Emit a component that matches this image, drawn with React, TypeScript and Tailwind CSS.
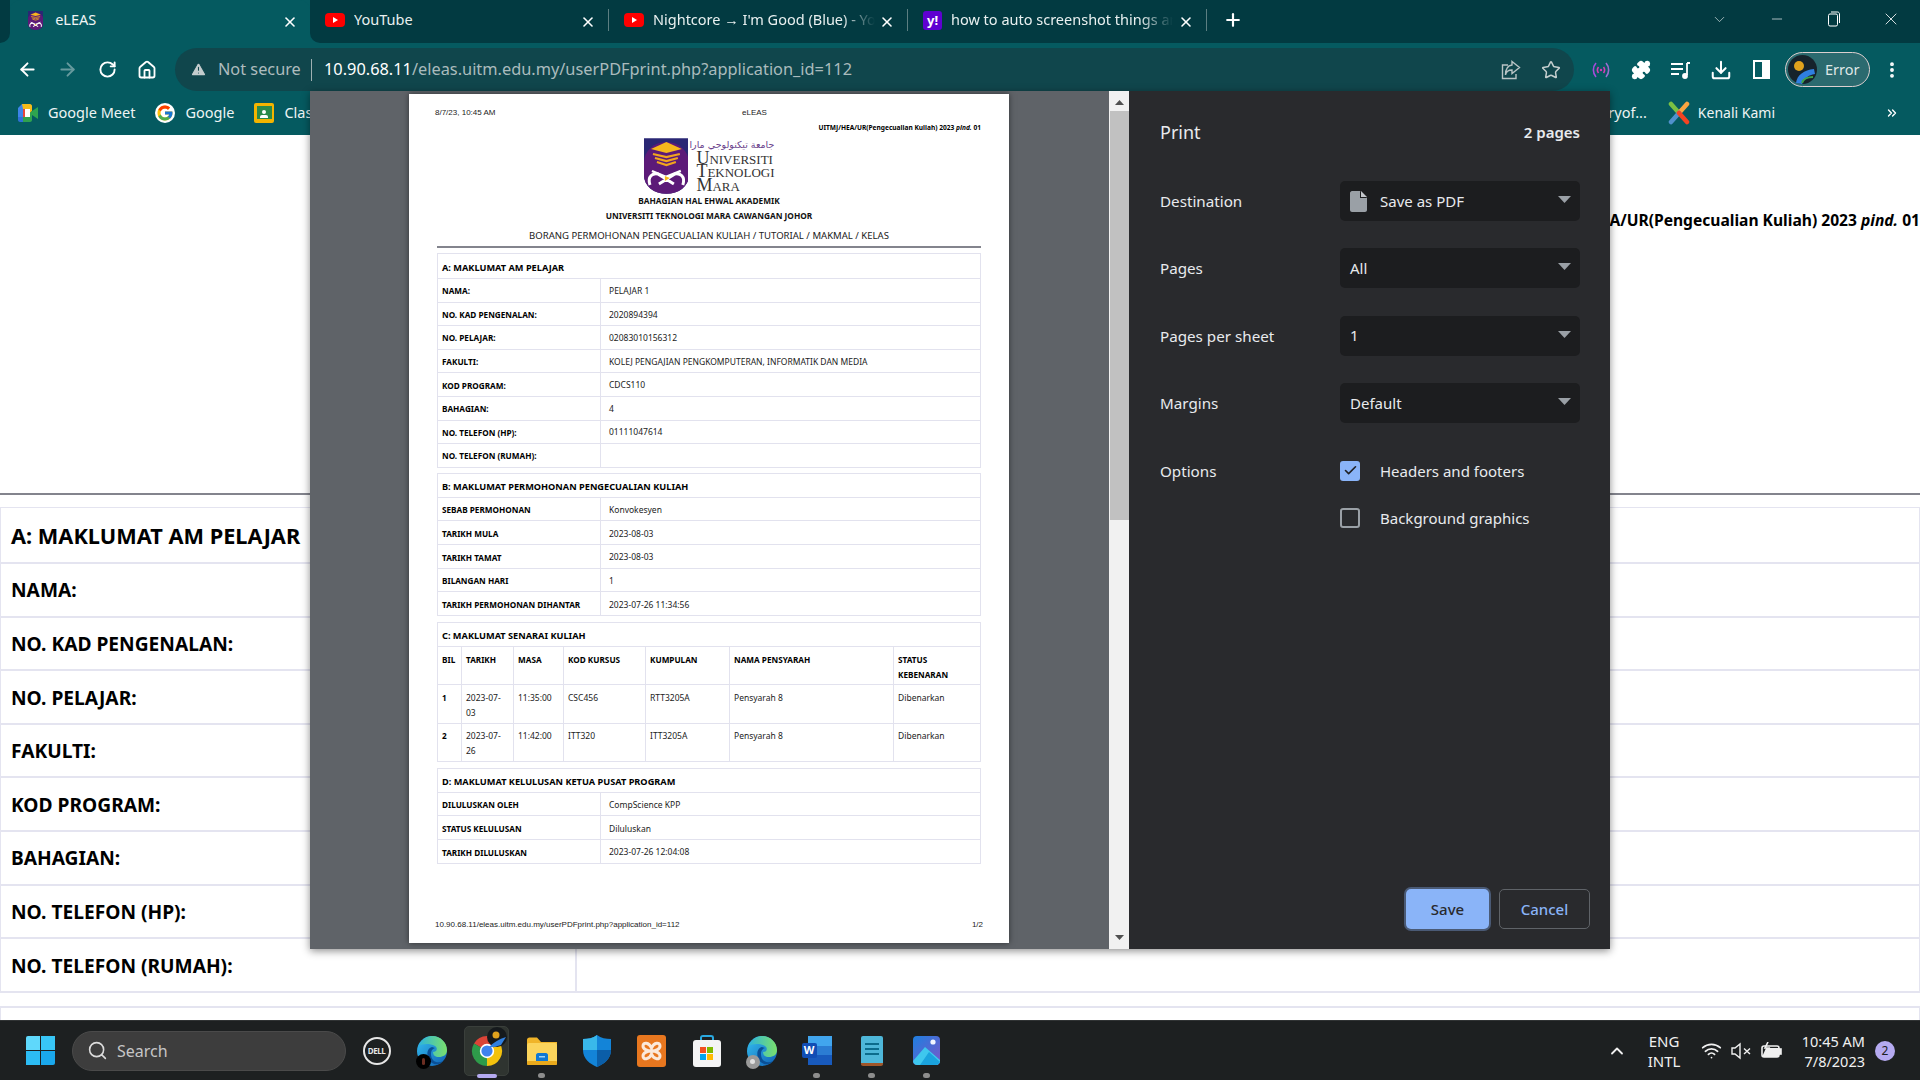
import React from 'react';
import { ArrowLeft, ArrowRight, RotateCw, Home, Star, Download, MoreVertical, X, Plus, ChevronDown, ChevronUp, Minus, Search, Wifi, Check, ChevronsRight, Puzzle, TriangleAlert } from 'lucide-react';
import { FcGoogle } from 'react-icons/fc';

const Shield = ({ size = 16 }: { size?: number }) => (
  <svg viewBox="0 0 45 56" width={size * 0.8} height={size}>
    <path d="M0 0H45V38A22.5 18 0 0 1 0 38Z" fill="#2a2774" />
    <path d="M0 24A22.5 20 0 0 1 45 24V38A22.5 18 0 0 1 0 38Z" fill="#5c1a78" />
    <path d="M22.5 4L38 11L22.5 15L7 11Z" fill="#f6b81c" />
    <path d="M9 16L22.5 19L36 16M11 20L22.5 23L34 20M13 24L22.5 27L32 24" stroke="#f2a51e" strokeWidth="2.2" fill="none" />
    <path d="M6 47C3 38 9 35 14 36L30 46M39 47C42 38 36 35 31 36L15 46" stroke="#fff" strokeWidth="3" fill="none" />
    <path d="M8 33L22 39L37 33" stroke="#fff" strokeWidth="2.4" fill="none" />
    <path d="M21 38L26 40L21 43Z" fill="#f6b81c" />
  </svg>
);

const YouTubeIcon = () => (
  <svg viewBox="0 0 20 20" width="20" height="20">
    <rect x="0" y="3" width="20" height="14" rx="4" fill="#f00" />
    <path d="M8 7L13 10L8 13Z" fill="#fff" />
  </svg>
);

const Tab = ({ icon, title, fade, sep = true }: { icon: React.ReactNode; title: string; fade?: boolean; sep?: boolean }) => (
  <div className="w-[299px] h-full shrink-0 flex items-center relative pl-[15px] pb-[3px]">
    {icon}
    <span className={`ml-[9px] text-[14.5px] text-[#e9f0f0] whitespace-nowrap overflow-hidden w-[222px] ${fade ? '[mask-image:linear-gradient(to_right,black_85%,transparent)]' : ''}`}>{title}</span>
    <X size={16} strokeWidth={2.4} className="absolute right-[13px] top-[14px] text-white" />
    {sep && <div className="absolute right-0 top-[9px] h-[22px] w-px bg-[#5c7f82]" />}
  </div>
);

const TabStrip = () => (
  <div className="h-[43px] bg-[#055a60] flex shrink-0">
    <div className="w-[10px] bg-[#023a41] rounded-br-[10px]" />
    <div className="w-[300px] bg-[#055a60] rounded-t-[10px] flex items-center relative pl-[18px] pb-[3px]">
      <Shield size={19} />
      <span className="ml-[12px] text-[14.5px] text-[#f0f5f5]">eLEAS</span>
      <X size={16} strokeWidth={2.4} className="absolute right-[12px] top-[14px] text-white" />
    </div>
    <div className="flex-1 bg-[#023a41] rounded-bl-[10px] flex items-stretch">
      <Tab icon={<YouTubeIcon />} title="YouTube" />
      <Tab icon={<YouTubeIcon />} title="Nightcore → I'm Good (Blue) - YouTube" fade />
      <Tab
        icon={<div className="w-[19px] h-[19px] rounded-[3px] bg-[#5f01d1] text-white text-[13px] font-bold flex items-center justify-center leading-none">y!</div>}
        title="how to auto screenshot things and paste"
        fade
      />
      <div className="w-[52px] flex items-center justify-center pb-[4px]">
        <Plus size={20} strokeWidth={2.6} className="text-white" />
      </div>
      <div className="flex-1" />
      <div className="w-[57px] flex items-center justify-center pb-[5px]"><ChevronDown size={17} strokeWidth={1} className="text-[#d8e2e3]" /></div>
      <div className="w-[57px] flex items-center justify-center pb-[5px]"><Minus size={16} strokeWidth={1} className="text-white" /></div>
      <div className="w-[57px] flex items-center justify-center pb-[5px]">
        <svg width="14" height="16" viewBox="0 0 14 16" fill="none" stroke="#fff" strokeWidth="1"><rect x="1.5" y="3" width="9" height="12" rx="1.5" /><path d="M4 1H10.5C11.8 1 12.5 2 12.5 3V12" /></svg>
      </div>
      <div className="w-[58px] flex items-center justify-center pb-[5px]"><X size={20} strokeWidth={1} className="text-white" /></div>
    </div>
  </div>
);

const ToolBtn = ({ children }: { children: React.ReactNode }) => (
  <div className="w-[40px] h-[40px] shrink-0 flex items-center justify-center">{children}</div>
);

const Toolbar = () => (
  <div className="h-[48px] bg-[#055a60] flex items-center pl-[7px] shrink-0 pt-[5px]">
    <ToolBtn><ArrowLeft size={21} strokeWidth={2.2} className="text-white" /></ToolBtn>
    <ToolBtn><ArrowRight size={21} strokeWidth={2.2} className="text-[#679a9e]" /></ToolBtn>
    <ToolBtn><RotateCw size={19} strokeWidth={2.4} className="text-white" /></ToolBtn>
    <ToolBtn><Home size={20} strokeWidth={2.2} className="text-white" /></ToolBtn>
    <div className="ml-[8px] w-[1399px] h-[43px] rounded-full bg-[#10464c] flex items-center pl-[15px] pr-[13px]">
      <TriangleAlert size={17} fill="#c3cccd" strokeWidth={1.5} className="text-[#10464c]" />
      <span className="ml-[11px] text-[16.3px] text-[#aebcbe] w-[83px] whitespace-nowrap">Not secure</span>
      <div className="ml-[10px] w-px h-[22px] bg-[#9fb0b2]" />
      <span className="ml-[12px] text-[16.35px] whitespace-nowrap text-[#aabbbd]"><span className="text-white">10.90.68.11</span>/eleas.uitm.edu.my/userPDFprint.php?application_id=112</span>
      <div className="ml-auto flex items-center gap-[20px]">
        <svg width="20" height="20" viewBox="0 0 20 20" fill="none" stroke="#b9c4c5" strokeWidth="1.4"><path d="M7 5H1.5V18.5H15V14" /><path d="M11 1.5L18.5 7.5L11 13.5V10C7 10 5 12 4.5 15C4.5 9 7 5.5 11 5Z" /></svg>
        <Star size={20} strokeWidth={1.8} className="text-[#c4cece]" />
      </div>
    </div>
    <div className="ml-[7px] flex">
      <ToolBtn>
        <svg width="18" height="18" viewBox="0 0 18 18" fill="none" strokeWidth="1.6"><path d="M4 2C0.5 6 0.5 12 4 16" stroke="#a54ddc" /><path d="M14 2C17.5 6 17.5 12 14 16" stroke="#9a6fd0" /><path d="M6.5 6C5 8 5 10 6.5 12M11.5 6C13 8 13 10 11.5 12" stroke="#d63ab6" /><circle cx="9" cy="9" r="1.2" fill="#d63ab6" stroke="none" /></svg>
      </ToolBtn>
      <ToolBtn><Puzzle size={20} fill="#fff" className="text-white" /></ToolBtn>
      <ToolBtn>
        <svg width="20" height="20" viewBox="0 0 20 20" fill="none" stroke="#fff" strokeWidth="1.8"><path d="M0 4H12M0 9H12M0 14H8" /><path d="M16 3H19M16 3V15" /><circle cx="14" cy="16" r="2" fill="#fff" /></svg>
      </ToolBtn>
      <ToolBtn><Download size={22} strokeWidth={2.2} className="text-white" /></ToolBtn>
      <ToolBtn>
        <div className="w-[17px] h-[19px] border-[2.5px] border-white flex justify-end"><div className="w-[6px] bg-white" /></div>
      </ToolBtn>
    </div>
    <div className="ml-[4px] w-[85px] h-[35px] rounded-full border-[1.5px] border-[#dccfcf] bg-[#2b6a6f] flex items-center pl-[2px]">
      <svg width="29" height="29" viewBox="0 0 29 29" className="shrink-0">
        <circle cx="14.5" cy="14.5" r="14.5" fill="#16232c" />
        <circle cx="11" cy="11" r="5" fill="#e0a21d" />
        <path d="M8 28C9 20 16 15 26 14L27 19C20 20 17 23 14 29Z" fill="#2f7fe0" />
        <path d="M14 28C15 24 20 22 25 22" stroke="#3fa24a" strokeWidth="2" fill="none" />
      </svg>
      <span className="ml-[8px] text-[14.5px] text-[#dfe6e6]">Error</span>
    </div>
    <div className="ml-[2px]"><ToolBtn><MoreVertical size={20} strokeWidth={2.6} className="text-white" /></ToolBtn></div>
  </div>
);

const BookmarkBar = () => (
  <div className="h-[44px] bg-[#055a60] flex items-center pl-[18px] pb-[1px] text-[14.5px] text-[#eef4f4] shrink-0 whitespace-nowrap">
    <svg width="20" height="18" viewBox="0 0 20 18" className="shrink-0">
      <path d="M0 4L4 0H12V5H5V13H0Z" fill="#3d84e8" />
      <path d="M0 13H5V18H2C1 18 0 17 0 16Z" fill="#2f6fd6" />
      <path d="M5 13H12V18H5Z" fill="#30a14e" />
      <path d="M4 0H12C13 0 14 1 14 2V7L12 9V5H5Z" fill="#f6bb19" />
      <path d="M7 5H12V13H7Z" fill="#fff" />
      <path d="M12 9L14 7L20 3V15L14 11V16C14 17 13 18 12 18Z" fill="#2ea44f" />
      <path d="M5 5H7V13H5Z" fill="#e8453c" />
    </svg>
    <span className="ml-[10px]">Google Meet</span>
    <div className="ml-[20px] w-[20px] h-[20px] rounded-full bg-white flex items-center justify-center shrink-0"><FcGoogle size={18} /></div>
    <span className="ml-[10px]">Google</span>
    <div className="ml-[20px] w-[20px] h-[20px] bg-[#f4b400] flex items-center justify-center shrink-0 rounded-[2px]">
      <div className="w-[15px] h-[13px] bg-[#2a8a4a] flex flex-col items-center justify-end pb-[1px] gap-[1px]">
        <div className="w-[4px] h-[4px] rounded-full bg-white" />
        <div className="w-[8px] h-[3px] bg-white rounded-t-[2px]" />
      </div>
    </div>
    <span className="ml-[10px]">Classroom</span>
    <div className="flex-1" />
    <span className="text-[#eef4f4]">Historyof...</span>
    <svg width="22" height="24" viewBox="0 0 22 24" className="ml-[21px] shrink-0" fill="none" strokeWidth="4.5" strokeLinecap="round">
      <path d="M3 3L11 12" stroke="#7ac143" />
      <path d="M19 3L11 12" stroke="#f9a541" />
      <path d="M3 21L11 12" stroke="#5091cd" />
      <path d="M19 21L11 12" stroke="#f44321" />
    </svg>
    <span className="ml-[8px] text-[14px]">Kenali Kami</span>
    <div className="ml-[109px] mr-[20px] w-[16px] flex justify-center"><ChevronsRight size={14} strokeWidth={2.4} className="text-white" /></div>
  </div>
);

const bgRows = ['NAMA:', 'NO. KAD PENGENALAN:', 'NO. PELAJAR:', 'FAKULTI:', 'KOD PROGRAM:', 'BAHAGIAN:', 'NO. TELEFON (HP):', 'NO. TELEFON (RUMAH):'];

const Background = () => (
  <div className="flex-1 bg-white overflow-hidden flex flex-col font-['Noto_Sans',sans-serif]">
    <div className="h-[358px] shrink-0 flex justify-end pt-[73px]">
      <span className="text-[15.6px] font-bold text-black whitespace-nowrap h-[24px] leading-[24px]">UITMJ/HEA/UR(Pengecualian Kuliah) 2023 <i>pind.</i> 01</span>
    </div>
    <div className="h-[2px] bg-[#83848d] shrink-0" />
    <div className="mt-[12px] border-x border-t border-[#e4e4f0] shrink-0">
      <div className="h-[56px] border-b-2 border-[#e4e4f0] flex items-center pl-[10px] pt-[2px] text-[21.75px] font-bold text-black">A: MAKLUMAT AM PELAJAR</div>
      {bgRows.map((r) => (
        <div key={r} className="h-[53.6px] border-b-2 border-[#e4e4f0] flex items-center pl-[10px] text-[19.2px] font-bold text-black">
          <div className="w-[566px] h-full flex items-center pt-[2px] border-r-2 border-[#e4e4f0]">{r}</div>
        </div>
      ))}
    </div>
    <div className="mt-[13px] h-[40px] border-x border-t-2 border-[#e4e4f0] shrink-0" />
  </div>
);

type Row = [string, string];

const PrintRow = ({ row, low }: { row: Row; low?: boolean }) => (
  <div className="h-[23.6px] border-b border-[#e2e2ee] flex">
    <div className={`w-[163px] shrink-0 border-r border-[#e2e2ee] pl-[4px] ${low ? 'pt-[3px]' : 'pt-[2px]'} flex items-center text-[8.2px] font-bold text-black`}>{row[0]}</div>
    <div className={`pl-[8px] ${low ? 'pt-[3px]' : 'pt-[2px]'} flex items-center text-[8.5px] text-[#222]`}>{row[1]}</div>
  </div>
);

const SectionHead = ({ title, h }: { title: string; h: string }) => (
  <div className={`${h} border-b border-[#e2e2ee] pl-[4px] pt-[3px] flex items-center text-[9.2px] font-bold text-black`}>{title}</div>
);

const sectionA: Row[] = [
  ['NAMA:', 'PELAJAR 1'],
  ['NO. KAD PENGENALAN:', '2020894394'],
  ['NO. PELAJAR:', '02083010156312'],
  ['FAKULTI:', 'KOLEJ PENGAJIAN PENGKOMPUTERAN, INFORMATIK DAN MEDIA'],
  ['KOD PROGRAM:', 'CDCS110'],
  ['BAHAGIAN:', '4'],
  ['NO. TELEFON (HP):', '01111047614'],
  ['NO. TELEFON (RUMAH):', ''],
];
const sectionB: Row[] = [
  ['SEBAB PERMOHONAN', 'Konvokesyen'],
  ['TARIKH MULA', '2023-08-03'],
  ['TARIKH TAMAT', '2023-08-03'],
  ['BILANGAN HARI', '1'],
  ['TARIKH PERMOHONAN DIHANTAR', '2023-07-26 11:34:56'],
];
const sectionD: Row[] = [
  ['DILULUSKAN OLEH', 'CompScience KPP'],
  ['STATUS KELULUSAN', 'Diluluskan'],
  ['TARIKH DILULUSKAN', '2023-07-26 12:04:08'],
];

const Cols = ({ cells, h, bold, high }: { cells: string[]; h: string; bold?: boolean; high?: boolean }) => {
  const widths = ['w-[24px]', 'w-[52px]', 'w-[50px]', 'w-[82px]', 'w-[84px]', 'w-[164px]', 'flex-1'];
  return (
    <div className={`${h} flex border-b border-[#e2e2ee] leading-[15px]`}>
      {cells.map((c, i) => (
        <div key={i} className={`${widths[i]} ${i < 6 ? 'border-r border-[#e2e2ee]' : ''} pl-[4px] pr-[6px] ${high ? 'pt-[4px]' : 'pt-[5px]'} ${bold || i === 0 ? 'text-[8.2px] font-bold text-black' : 'text-[8.5px] text-[#222]'}`}>{c}</div>
      ))}
    </div>
  );
};

const PrintPage = () => (
  <div className="w-[600px] h-[849px] bg-white shrink-0 flex flex-col shadow-[0_0_6px_rgba(0,0,0,0.5)] font-['Noto_Sans',sans-serif]">
    <div className="pt-[13px] px-[26px] relative flex justify-between text-[8px] leading-[12px] text-[#222] font-['Liberation_Sans',sans-serif]">
      <span>8/7/23, 10:45 AM</span>
      <span className="absolute left-[333px] top-[13px]">eLEAS</span>
    </div>
    <div className="mt-[3px] pr-[28px] text-right text-[6.6px] leading-[12px] font-bold text-black">UITMJ/HEA/UR(Pengecualian Kuliah) 2023 <i>pind.</i> 01</div>
    <div className="mt-[4px] h-[56px] flex justify-center gap-[8px]">
      <Shield size={56} />
      <div className="w-[78px] text-[#333] font-['Liberation_Serif',serif]">
        <div className="h-[14px] leading-[14px] text-[9.5px] text-[#6a3f8c] whitespace-nowrap text-center font-['DejaVu_Sans',sans-serif]" dir="rtl">جامعة تيكنولوجي مارا</div>
        <div className="text-[18px] leading-[13.3px] [font-variant:small-caps] whitespace-nowrap">Universiti</div>
        <div className="text-[18px] leading-[13.3px] [font-variant:small-caps] whitespace-nowrap">Teknologi</div>
        <div className="text-[18px] leading-[13.3px] [font-variant:small-caps] whitespace-nowrap">Mara</div>
      </div>
    </div>
    <div className="mt-[1px] text-center text-[8.3px] leading-[12px] font-bold text-[#111]">BAHAGIAN HAL EHWAL AKADEMIK</div>
    <div className="mt-[3px] text-center text-[8.3px] leading-[12px] font-bold text-[#111]">UNIVERSITI TEKNOLOGI MARA CAWANGAN JOHOR</div>
    <div className="mt-[7px] text-center text-[9.55px] leading-[14px] text-[#222]">BORANG PERMOHONAN PENGECUALIAN KULIAH / TUTORIAL / MAKMAL / KELAS</div>
    <div className="mt-[3px] mx-[28px] h-[2px] bg-[#83848d]" />
    <div className="mt-[5px] mx-[28px] border-x border-t border-[#e2e2ee]">
      <SectionHead title="A: MAKLUMAT AM PELAJAR" h="h-[25px]" />
      {sectionA.map((r) => <PrintRow key={r[0]} row={r} />)}
    </div>
    <div className="mt-[5px] mx-[28px] border-x border-t border-[#e2e2ee]">
      <SectionHead title="B: MAKLUMAT PERMOHONAN PENGECUALIAN KULIAH" h="h-[24px]" />
      {sectionB.map((r) => <PrintRow key={r[0]} row={r} low />)}
    </div>
    <div className="mt-[6px] mx-[28px] border-x border-t border-[#e2e2ee]">
      <SectionHead title="C: MAKLUMAT SENARAI KULIAH" h="h-[24px]" />
      <Cols bold h="h-[38px]" cells={['BIL', 'TARIKH', 'MASA', 'KOD KURSUS', 'KUMPULAN', 'NAMA PENSYARAH', 'STATUS KEBENARAN']} />
      <Cols h="h-[39px]" cells={['1', '2023-07-03', '11:35:00', 'CSC456', 'RTT3205A', 'Pensyarah 8', 'Dibenarkan']} />
      <Cols high h="h-[38px]" cells={['2', '2023-07-26', '11:42:00', 'ITT320', 'ITT3205A', 'Pensyarah 8', 'Dibenarkan']} />
    </div>
    <div className="mt-[6px] mx-[28px] border-x border-t border-[#e2e2ee]">
      <SectionHead title="D: MAKLUMAT KELULUSAN KETUA PUSAT PROGRAM" h="h-[24px]" />
      {sectionD.map((r) => <PrintRow key={r[0]} row={r} low />)}
    </div>
    <div className="mt-auto mb-[12px] px-[26px] flex justify-between text-[8px] leading-[12px] text-[#222] font-['Liberation_Sans',sans-serif]">
      <span>10.90.68.11/eleas.uitm.edu.my/userPDFprint.php?application_id=112</span>
      <span>1/2</span>
    </div>
  </div>
);

const SelectRow = ({ label, value, icon }: { label: string; value: string; icon?: boolean }) => (
  <div className="flex items-center justify-between h-[40px]">
    <span className="text-[15.2px] pt-[1px] text-[#e8eaed]">{label}</span>
    <div className="w-[240px] h-[40px] rounded-[5px] bg-[#1c1d1f] flex items-center px-[10px] relative">
      {icon && (
        <svg width="17" height="21" viewBox="0 0 17 21" className="mr-[13px]" fill="#9aa0a6"><path d="M2 0H10L17 7V19C17 20 16 21 15 21H2C1 21 0 20 0 19V2C0 1 1 0 2 0Z" /><path d="M10 0V7H17Z" fill="#1c1d1f" /><path d="M11 0L17 6H11Z" fill="#c5c8cc" /></svg>
      )}
      <span className="text-[15px] text-[#e8eaed]">{value}</span>
      <svg width="13" height="7" viewBox="0 0 13 7" className="absolute right-[9px] top-[15px]" fill="#9aa0a6"><path d="M0 0H13L6.5 7Z" /></svg>
    </div>
  </div>
);

const PrintSidebar = () => (
  <div className="w-[481px] shrink-0 bg-[#292a2d] flex flex-col font-['Noto_Sans',sans-serif]">
    <div className="ml-[31px] mr-[30px] mt-[27px] h-[28px] flex items-center justify-between">
      <span className="text-[18px] text-[#e8eaed]">Print</span>
      <span className="text-[15px] font-semibold text-[#e8eaed]">2 pages</span>
    </div>
    <div className="ml-[31px] mr-[30px] mt-[35px] flex flex-col gap-[27.33px]">
      <SelectRow label="Destination" value="Save as PDF" icon />
      <SelectRow label="Pages" value="All" />
      <SelectRow label="Pages per sheet" value="1" />
      <SelectRow label="Margins" value="Default" />
    </div>
    <div className="ml-[31px] mr-[30px] mt-[38px] flex">
      <span className="w-[180px] text-[15.2px] leading-[20px] text-[#e8eaed]">Options</span>
      <div className="flex flex-col gap-[27px]">
        <div className="flex items-center h-[20px]">
          <div className="w-[20px] h-[20px] rounded-[3px] bg-[#8ab4f8] flex items-center justify-center"><Check size={15} strokeWidth={2.6} className="text-[#202124]" /></div>
          <span className="ml-[20px] text-[15px] text-[#e8eaed]">Headers and footers</span>
        </div>
        <div className="flex items-center h-[20px]">
          <div className="w-[20px] h-[20px] rounded-[3px] border-2 border-[#9aa0a6]" />
          <span className="ml-[20px] text-[15px] text-[#e8eaed]">Background graphics</span>
        </div>
      </div>
    </div>
    <div className="mt-auto mb-[20px] mr-[20px] flex justify-end gap-[10px]">
      <div className="w-[83px] h-[40px] rounded-[5px] bg-[#8ab4f8] ring-2 ring-[#4a5a75] flex items-center justify-center text-[15px] font-medium text-[#292a2d]">Save</div>
      <div className="w-[91px] h-[40px] rounded-[5px] border border-[#5f6368] flex items-center justify-center text-[15px] font-medium text-[#8ab4f8]">Cancel</div>
    </div>
  </div>
);

const PrintDialog = () => (
  <div className="absolute left-[310px] top-[91px] w-[1300px] h-[858px] flex shadow-[0_2px_8px_rgba(0,0,0,0.45)]">
    <div className="flex-1 bg-[#5f6368] pl-[99px] pt-[3px] overflow-hidden">
      <PrintPage />
    </div>
    <div className="w-[20px] shrink-0 bg-[#f1f1f1] flex flex-col items-center pl-[1px]">
      <svg width="9" height="5" viewBox="0 0 9 5" className="mt-[9px]" fill="#505050"><path d="M0 5L4.5 0L9 5Z" /></svg>
      <div className="w-full mt-[6px] h-[409px] bg-[#c1c1c1]" />
      <svg width="9" height="5" viewBox="0 0 9 5" className="mt-auto mb-[9px]" fill="#505050"><path d="M0 0L4.5 5L9 0Z" /></svg>
    </div>
    <PrintSidebar />
  </div>
);

const EdgeIcon = ({ badge }: { badge: React.ReactNode }) => (
  <div className="relative w-[32px] h-[32px]">
    <svg width="32" height="32" viewBox="0 0 32 32">
      <defs>
        <linearGradient id="edgeA" x1="0" y1="0" x2="1" y2="1"><stop offset="0" stopColor="#35c1f1" /><stop offset="1" stopColor="#0f5fb5" /></linearGradient>
        <linearGradient id="edgeB" x1="0" y1="0" x2="1" y2="0"><stop offset="0" stopColor="#2fb5d9" /><stop offset="1" stopColor="#7be06b" /></linearGradient>
      </defs>
      <circle cx="16" cy="16" r="15" fill="url(#edgeA)" />
      <path d="M3 11C6 3 13 1 16 1C25 1 31 8 31 15C31 20 27 22 23 22C19 22 17 20 17 17C21 17 22 13 19 11C13 8 6 9 3 11Z" fill="url(#edgeB)" />
      <path d="M16 12C11 13 10 20 13 25C17 31 24 30 27 26C22 29 15 27 15 19C15 16 16 14 19 13Z" fill="#0a4f96" />
    </svg>
    {badge}
  </div>
);

const TaskIcon = ({ children, dot, active }: { children: React.ReactNode; dot?: boolean; active?: boolean }) => (
  <div className="w-[55px] h-[60px] flex items-center justify-center relative shrink-0">
    {active && <div className="absolute left-[5px] top-[5px] w-[45px] h-[50px] rounded-[5px] bg-[#2f3430] border border-[#3a3f3b]" />}
    <div className="relative">{children}</div>
    {dot && <div className="absolute bottom-[3px] left-[24px] w-[7px] h-[5px] rounded-full bg-[#8d8d8d]" />}
    {active && <div className="absolute bottom-[3px] left-[18px] w-[20px] h-[4px] rounded-full bg-[#b5aaf0]" />}
  </div>
);

const Taskbar = () => (
  <div className="h-[60px] bg-[#1d2021] border-t border-[#303334] flex items-center shrink-0 font-['Noto_Sans',sans-serif]">
    <div className="ml-[26px] w-[29px] h-[29px] grid grid-cols-2 grid-rows-2 gap-[1.5px] shrink-0">
      <div className="bg-[#5fd8fb] rounded-tl-[2px]" />
      <div className="bg-[#38c6f6]" />
      <div className="bg-[#2cbcf4]" />
      <div className="bg-[#1aa8ec] rounded-br-[2px]" />
    </div>
    <div className="ml-[17px] w-[274px] h-[40px] rounded-full bg-[#3d3d3d] border border-[#4a4a4a] flex items-center pl-[14px] shrink-0">
      <Search size={21} strokeWidth={1.8} className="text-[#dcdcdc]" />
      <span className="ml-[9px] text-[16px] text-[#c6c6c6]">Search</span>
    </div>
    <div className="ml-[3px] flex">
      <TaskIcon>
        <div className="w-[28px] h-[28px] rounded-full border-2 border-[#e6e6e6] flex items-center justify-center text-[8px] font-bold text-[#e6e6e6] tracking-[-0.5px]">DELL</div>
      </TaskIcon>
      <TaskIcon>
        <EdgeIcon badge={<div className="absolute left-0 bottom-[-2px] w-[15px] h-[15px] rounded-full bg-black flex items-center justify-center"><div className="w-[3px] h-[7px] rounded-full bg-[#6b2e22]" /></div>} />
      </TaskIcon>
      <TaskIcon active>
        <svg width="32" height="32" viewBox="0 0 32 32">
          <path d="M16 16L3 8.5A15 15 0 0 1 29 8.5Z" fill="#db4437" />
          <path d="M16 16L29 8.5A15 15 0 0 1 16 31Z" fill="#f4c20d" />
          <path d="M16 16L16 31A15 15 0 0 1 3 8.5Z" fill="#2e9b4a" />
          <circle cx="16" cy="16" r="7.2" fill="#fff" />
          <circle cx="16" cy="16" r="5.6" fill="#3f82ee" />
        </svg>
        <svg width="20" height="22" viewBox="0 0 20 22" className="absolute right-[-4px] top-[-8px]">
          <circle cx="10" cy="10" r="10" fill="#15191c" />
          <circle cx="9" cy="8" r="3.5" fill="#e0a21d" />
          <path d="M2 20C6 16 12 12 19 10L14 18C10 19 6 21 2 20Z" fill="#2f7fe0" />
        </svg>
      </TaskIcon>
      <TaskIcon dot>
        <svg width="30" height="28" viewBox="0 0 30 28">
          <path d="M0 3C0 1.5 1 0.5 2.5 0.5H10L14 5H30V9H0Z" fill="#f0b429" />
          <rect x="0" y="6" width="30" height="22" rx="2" fill="#fbd45c" />
          <rect x="0" y="24" width="30" height="4" rx="1" fill="#e9a91c" />
          <path d="M9 18C9 17 10 16 11 16H19C20 16 21 17 21 18V24H9Z" fill="#0f78d4" />
          <rect x="12" y="19" width="6" height="1.5" fill="#9fd3f7" />
        </svg>
      </TaskIcon>
      <TaskIcon>
        <svg width="28" height="32" viewBox="0 0 28 32">
          <path d="M14 0C18 3 23 4 28 4V15C28 24 21 29 14 32C7 29 0 24 0 15V4C5 4 10 3 14 0Z" fill="#1384d8" />
          <path d="M14 0C10 3 5 4 0 4V15H14Z" fill="#39b8ea" />
          <path d="M14 15H28C28 24 21 29 14 32Z" fill="#0b5ea8" />
        </svg>
      </TaskIcon>
      <TaskIcon>
        <div className="w-[29px] h-[32px] rounded-[3px] bg-[#e8771f] flex items-center justify-center">
          <svg width="21" height="22" viewBox="0 0 21 22" fill="none" stroke="#fbe9da" strokeWidth="3"><path d="M10.5 8C8 2 2 2 2 6C2 9 6 11 10.5 11C15 11 19 9 19 6C19 2 13 2 10.5 8ZM10.5 14C8 20 2 20 2 16C2 13 6 11 10.5 11C15 11 19 13 19 16C19 20 13 20 10.5 14Z" /></svg>
        </div>
      </TaskIcon>
      <TaskIcon>
        <div className="w-[28px] h-[32px] relative">
          <div className="absolute left-[7px] top-0 w-[14px] h-[8px] border-2 border-b-0 border-[#2aa9e0] rounded-t-[3px]" />
          <div className="absolute left-0 top-[5px] w-[28px] h-[27px] rounded-[3px] bg-[#f4f4f4] flex items-center justify-center">
            <div className="grid grid-cols-[6px_6px] grid-rows-[6px_6px] gap-[1px]">
              <div className="bg-[#f25022]" />
              <div className="bg-[#7fba00]" />
              <div className="bg-[#00a4ef]" />
              <div className="bg-[#ffb900]" />
            </div>
          </div>
        </div>
      </TaskIcon>
      <TaskIcon>
        <EdgeIcon badge={<div className="absolute left-0 bottom-[-2px] w-[14px] h-[14px] rounded-full bg-[#9a9a9a] flex items-center justify-center"><div className="w-[5px] h-[5px] rounded-full bg-[#e0e0e0]" /></div>} />
      </TaskIcon>
      <TaskIcon dot>
        <div className="w-[30px] h-[29px] relative">
          <div className="absolute left-[6px] top-0 w-[24px] h-[29px] rounded-[2px] bg-[#2b7cd3] flex flex-col">
            <div className="flex-1 bg-[#41a5ee]" /><div className="flex-1 bg-[#2b7cd3]" /><div className="flex-1 bg-[#185abd]" />
          </div>
          <div className="absolute left-0 top-[7px] w-[15px] h-[15px] rounded-[2px] bg-[#114db5] flex items-center justify-center text-[11px] font-bold text-white">W</div>
        </div>
      </TaskIcon>
      <TaskIcon dot>
        <div className="w-[22px] h-[30px] rounded-[2px] bg-[#4eb7d9] flex flex-col items-center justify-center gap-[3px] border-b-[3px] border-[#a0562a]">
          <div className="w-[14px] h-[2px] bg-[#0c6c8c]" /><div className="w-[14px] h-[2px] bg-[#0c6c8c]" /><div className="w-[14px] h-[2px] bg-[#0c6c8c]" />
        </div>
      </TaskIcon>
      <TaskIcon dot>
        <svg width="27" height="29" viewBox="0 0 27 29">
          <defs><linearGradient id="ph" x1="0" y1="0" x2="1" y2="1"><stop offset="0" stopColor="#1d7fe0" /><stop offset="1" stopColor="#7b57c8" /></linearGradient></defs>
          <rect width="27" height="29" rx="4" fill="url(#ph)" />
          <path d="M0 25L12 11L27 24V25C27 27 25 29 23 29H4C2 29 0 27 0 25Z" fill="#3ec7ee" />
          <path d="M7 29L16 16L27 26V25C27 27 25 29 23 29Z" fill="#1aa3de" />
          <circle cx="20" cy="6" r="2.6" fill="#f2f6ff" />
        </svg>
      </TaskIcon>
    </div>
    <div className="ml-auto flex items-center pr-[25px] text-[#f0f0f0]">
      <ChevronUp size={20} strokeWidth={2.2} />
      <div className="ml-[17px] text-[15px] leading-[20px] text-center w-[40px]">
        <div>ENG</div><div>INTL</div>
      </div>
      <Wifi size={21} strokeWidth={2} className="ml-[17px]" />
      <svg width="21" height="18" viewBox="0 0 21 18" fill="none" stroke="#f0f0f0" strokeWidth="1.4" className="ml-[9px]"><path d="M1 6H4L9 2V16L4 12H1Z" /><path d="M13 6.5L19 12M19 6.5L13 12" /></svg>
      <svg width="21" height="18" viewBox="0 0 21 18" fill="none" stroke="#f0f0f0" strokeWidth="1.6" className="ml-[9px]"><rect x="1" y="4" width="17" height="11" rx="2" /><rect x="18" y="7" width="2" height="5" fill="#f0f0f0" /><path d="M1 15L5 6H18V15Z" fill="#f0f0f0" stroke="none" /><path d="M7 0L4 6H8L6 10" stroke="#f0f0f0" /></svg>
      <div className="ml-[1px] w-[82px] text-right text-[14.5px] leading-[20px]">
        <div>10:45 AM</div><div>7/8/2023</div>
      </div>
      <div className="ml-[10px] w-[20px] h-[20px] rounded-full bg-[#b5aaf0] flex items-center justify-center text-[12px] text-[#1d2021]">2</div>
    </div>
  </div>
);

const App: React.FC = () => {
  return (
    <div className="w-[1920px] h-[1080px] relative overflow-hidden flex flex-col font-['Noto_Sans',sans-serif]">
      <TabStrip />
      <Toolbar />
      <BookmarkBar />
      <Background />
      <Taskbar />
      <PrintDialog />
    </div>
  );
};

export default App;
